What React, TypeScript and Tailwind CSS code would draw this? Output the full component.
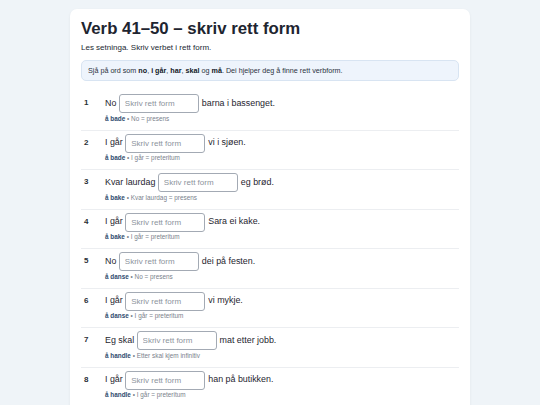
import React from 'react';

type Row = {
  before: string;
  after: string;
  verb: string;
  note: string;
};

const rows: Row[] = [
  { before: 'No', after: 'barna i bassenget.', verb: 'å bade', note: 'No = presens' },
  { before: 'I går', after: 'vi i sjøen.', verb: 'å bade', note: 'I går = preteritum' },
  { before: 'Kvar laurdag', after: 'eg brød.', verb: 'å bake', note: 'Kvar laurdag = presens' },
  { before: 'I går', after: 'Sara ei kake.', verb: 'å bake', note: 'I går = preteritum' },
  { before: 'No', after: 'dei på festen.', verb: 'å danse', note: 'No = presens' },
  { before: 'I går', after: 'vi mykje.', verb: 'å danse', note: 'I går = preteritum' },
  { before: 'Eg skal', after: 'mat etter jobb.', verb: 'å handle', note: 'Etter skal kjem infinitiv' },
  { before: 'I går', after: 'han på butikken.', verb: 'å handle', note: 'I går = preteritum' },
  { before: 'No', after: 'eg ei bok.', verb: 'å lese', note: 'No = presens' },
  { before: 'I går', after: 'ho ei avis.', verb: 'å lese', note: 'I går = preteritum' },
];

export default function App() {
  return (
    <div
      className="min-h-screen bg-[#eff4f8] pt-[9px] pb-6"
      style={{ fontFamily: '"Liberation Sans", Arial, sans-serif' }}
    >
      <div className="mx-auto w-[400px] rounded-[7px] bg-white px-[11px] pt-[10px] pb-4 shadow-[0_1px_3px_rgba(15,23,42,0.06)]">
        <h1 className="text-[16.8px] leading-[20px] font-bold text-[#1e2530]">
          Verb 41–50 – skriv rett form
        </h1>
        <p className="mt-[3px] text-[8px] leading-[12px] text-[#222831]">
          Les setninga. Skriv verbet i rett form.
        </p>

        <div className="mt-[6px] rounded-[5px] border border-[#d8e4f2] bg-[#eef4fc] px-[6px] py-[5px] text-[7.2px] leading-[9px] text-[#2b3340]">
          Sjå på ord som <b className="text-[#111827]">no</b>, <b className="text-[#111827]">i går</b>,{' '}
          <b className="text-[#111827]">har</b>, <b className="text-[#111827]">skal</b> og{' '}
          <b className="text-[#111827]">må</b>. Dei hjelper deg å finne rett verbform.
        </div>

        <ol className="mt-[10px]">
          {rows.map((r, i) => (
            <li
              key={i}
              className="flex border-b border-[#eceef1] pt-[3px] pb-[7px]"
            >
              <div className="w-[24px] shrink-0 pl-[3px] pt-[4px] text-[8px] leading-[10px] font-semibold text-[#2a2f36]">
                {i + 1}
              </div>
              <div className="flex flex-col">
                <div className="flex h-[19px] items-center text-[8.9px] text-[#1f2630]">
                  <span>{r.before}</span>
                  <span className="w-[2.5px]" />
                  <input
                    placeholder="Skriv rett form"
                    className="h-[19px] w-[80px] rounded-[3px] border border-[#a3aab4] bg-white px-[5px] text-[8px] text-[#1f2630] outline-none placeholder:text-[#8c939c]"
                  />
                  <span className="w-[3px]" />
                  <span>{r.after}</span>
                </div>
                <div className="mt-[1.5px] text-[6.4px] leading-[8px] text-[#7a828c]">
                  <b className="font-bold text-[#2f4b6e]">{r.verb}</b> • {r.note}
                </div>
              </div>
            </li>
          ))}
        </ol>
      </div>
    </div>
  );
}
